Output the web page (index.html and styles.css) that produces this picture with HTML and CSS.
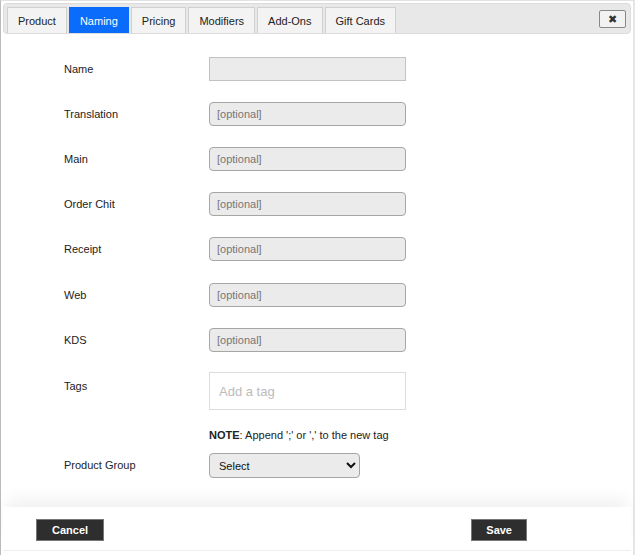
FILE: index.html
```html
<!DOCTYPE html>
<html lang="en">

<head>
  <meta charset="UTF-8">
  <title>Product - Naming</title>
  <link rel="stylesheet" href="styles.css">
</head>

<body>

  <div class="dialog">
    <div class="tabbar">
      <div class="tabs">
        <button class="tab">Product</button>
        <button class="tab active">Naming</button>
        <button class="tab">Pricing</button>
        <button class="tab">Modifiers</button>
        <button class="tab">Add-Ons</button>
        <button class="tab">Gift Cards</button>
      </div>
      <button class="close" title="Close">&#10006;</button>
    </div>

    <form class="naming">
      <div class="row">
        <label>Name</label>
        <input class="field square" />
      </div>
      <div class="row">
        <label>Translation</label>
        <input class="field" placeholder="[optional]" />
      </div>
      <div class="row">
        <label>Main</label>
        <input class="field" placeholder="[optional]" />
      </div>
      <div class="row">
        <label>Order Chit</label>
        <input class="field" placeholder="[optional]" />
      </div>
      <div class="row wide">
        <label>Receipt</label>
        <input class="field" placeholder="[optional]" />
      </div>
      <div class="row">
        <label>Web</label>
        <input class="field" placeholder="[optional]" />
      </div>
      <div class="row">
        <label>KDS</label>
        <input class="field" placeholder="[optional]" />
      </div>
      <div class="row tags-row">
        <label>Tags</label>
        <div class="tags">
          <input placeholder="Add a tag" />
        </div>
      </div>
      <p class="note"><b>NOTE</b>: Append ';' or ',' to the new tag</p>
      <div class="row">
        <label>Product Group</label>
        <select class="group">
          <option>Select</option>
        </select>
      </div>
    </form>

    <div class="footer">
      <button class="btn">Cancel</button>
      <button class="btn save">Save</button>
    </div>
  </div>

</body>

</html>
```

FILE: styles.css
```css
body {
  margin: 0;
  font-family: 'Liberation Sans', Arial, sans-serif;
  font-size: 11px;
  color: #222;
  background: #fff;
}

.dialog {
  height: 555px;
  box-sizing: border-box;
  border-top: 1px solid #e2e2e2;
  border-left: 1px solid #bbb;
  border-right: 2px solid #e6e6e6;
  display: flex;
  flex-direction: column;
}

.tabbar {
  margin: 2px 2px 0 2px;
  height: 31px;
  box-sizing: border-box;
  background: #e8e8e8;
  border: 1px solid #dcdcdc;
  border-radius: 4px;
  display: flex;
  justify-content: space-between;
  padding: 4px 4px 0 3px;
}

.tabs {
  display: flex;
  gap: 2px;
  align-items: flex-end;
}

.tab {
  height: 26px;
  padding: 0 10px;
  background: #f3f3f3;
  border: 1px solid #d0d0d0;
  border-bottom: none;
  font-family: inherit;
  font-size: 11px;
  color: #222;
}

.tab.active {
  background: #0b6cfb;
  border-color: #0b6cfb;
  color: #fff;
}

.close {
  width: 27px;
  height: 18px;
  margin-top: 2px;
  padding: 0;
  background: #f2f2f2;
  border: 1px solid #888;
  border-radius: 2px;
  font-size: 11px;
  line-height: 14px;
  color: #333;
}

.naming {
  flex: 1;
  padding: 23px 0 0 63px;
}

.row {
  display: grid;
  grid-template-columns: 145px 197px;
  align-items: start;
  margin-bottom: 21px;
}

.row.wide {
  margin-bottom: 22px;
}

.row label {
  line-height: 24px;
}

.field {
  height: 24px;
  box-sizing: border-box;
  padding: 0 7px;
  background: #ebebeb;
  border: 1px solid #a6a6a6;
  border-radius: 4px;
  font-family: 'Liberation Sans', Arial, sans-serif;
  font-size: 11px;
}

.field.square {
  border-radius: 0;
  border-color: #c2c2c2;
}

.field::placeholder {
  color: #777;
}

.tags-row {
  margin-top: -1px;
  margin-bottom: 0;
}

.tags-row label {
  line-height: 28px;
}

.tags {
  height: 38px;
  box-sizing: border-box;
  border: 1px solid #ddd;
  display: flex;
  align-items: center;
  padding: 0 9px;
}

.tags input {
  border: none;
  outline: none;
  width: 100%;
  font-family: 'Liberation Sans', Arial, sans-serif;
  font-size: 13px;
  padding: 0;
}

.tags input::placeholder {
  color: #bbb;
}

.note {
  margin: 19px 0 12px 145px;
  font-size: 11px;
  color: #222;
}

.group {
  width: 151px;
  height: 25px;
  padding: 0 5px;
  background: #ebebeb;
  border: 1px solid #a6a6a6;
  border-radius: 4px;
  font-family: 'Liberation Sans', Arial, sans-serif;
  font-size: 11px;
  color: #111;
}

.footer {
  height: 40px;
  margin: 0 2px 4px 2px;
  background: #fff;
  border-bottom: 1px solid #eee;
  box-shadow: 0 -12px 16px -4px rgba(0, 0, 0, 0.06);
  display: flex;
  justify-content: space-between;
  align-items: center;
  padding: 3px 104px 0 33px;
}

.btn {
  height: 22px;
  padding: 0 15px;
  background: #2e2e2e;
  border: 1px solid #777;
  color: #fff;
  font-family: 'Liberation Sans', Arial, sans-serif;
  font-size: 11px;
  font-weight: bold;
}

.btn.save {
  padding: 0 14px;
}
```
